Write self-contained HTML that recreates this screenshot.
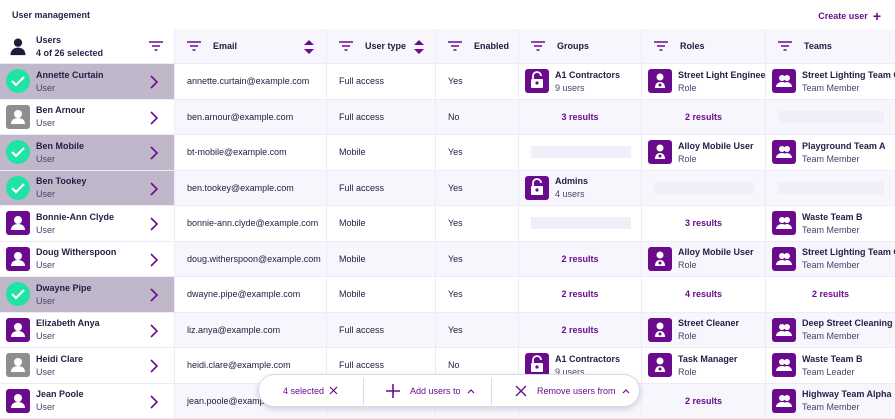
<!DOCTYPE html>
<html><head><meta charset="utf-8"><style>
*{box-sizing:border-box;margin:0;padding:0}
body{width:895px;height:419px;overflow:hidden;background:#fff;font-family:"Liberation Sans",Arial,sans-serif;color:#1f1b3f;font-size:9px;position:relative}
.top{position:absolute;left:12px;top:10px;font-weight:bold;font-size:9px;color:#2a1f4a}
.create{position:absolute;right:14px;top:8px;font-weight:bold;font-size:9px;color:#6b0d8f}
.create b{font-size:14px;margin-left:5px;vertical-align:-2px}
.hdr{position:absolute;top:29px;left:0;width:895px;height:35px;background:#f6f6fc;border-bottom:1px solid #ecebf7}
.row{position:absolute;left:0;width:895px;height:35.5px;border-bottom:1px solid #ecebf7}
.row.alt{background:#f6f6fc}
.c{position:absolute;top:0;height:100%;border-left:1px solid #ecebf7;display:flex;align-items:center;overflow:hidden;white-space:nowrap}
.c0{left:0;width:174px;background:#fff;border-left:none}
.sel .c0{background:#c0b7cb}
.c1{left:174px;width:152px;padding-left:12px}
.c2{left:326px;width:109px;padding-left:12px}
.c3{left:435px;width:83px;padding-left:12px}
.c4{left:518px;width:123px;padding-left:6px}
.c5{left:641px;width:124px;padding-left:6px}
.c6{left:765px;width:130px;padding-left:6px}
.hdr .c{font-weight:bold}
.av{width:24px;height:24px;border-radius:3px;margin-left:6px;margin-right:6px;display:flex;align-items:center;justify-content:center;flex:none}
.pu{background:#6a0a8d}.gr{background:#8e8e8e}
.ck{background:#20e3a6;border-radius:50%}
.nm b{display:block;font-size:9px;color:#231d45;margin-bottom:3px}
.nm span{color:#4a3f6a}
.arr{position:absolute;left:150px;top:11px}
.res{justify-content:center;color:#6b0d8f;font-weight:bold;padding-left:0}
.sk{display:block;width:100px;height:12px;background:#f0eef8;margin-left:6px}
.ic{width:24px;height:24px;border-radius:3px;background:#6a0a8d;margin-right:6px;flex:none;display:flex;align-items:center;justify-content:center}
.flt{margin-right:12px}
.tb{position:absolute;left:258px;top:374px;width:382px;height:33px;background:#fff;border:1px solid #ddd9ea;border-radius:17px;box-shadow:0 2px 6px rgba(60,40,90,.2);color:#6b0d8f;font-size:9px}
.tb div{position:absolute;top:0;height:100%;display:flex;align-items:center}
.dv{position:absolute;top:3px;width:1px;height:27px;background:#ddd9ea}
</style></head><body>
<div class="top">User management</div>
<div class="create">Create user<b>+</b></div>

<svg width="0" height="0" style="position:absolute"><defs>
<g id="flt"><path d="M0 1h14M3 5h8M5.5 9h3" stroke="#6b0d8f" stroke-width="1.6"/></g>
<g id="sort"><path d="M5 0L10 5H0zM5 14L10 9H0z" fill="#6b0d8f"/></g>
<g id="chev"><path d="M1 1l6 6-6 6" stroke="#6b0d8f" stroke-width="1.6" fill="none"/></g>
<g id="person"><circle cx="12" cy="9" r="4" fill="#fff"/><path d="M5 19c0-4 3-6 7-6s7 2 7 6z" fill="#fff"/></g>
<g id="check"><path d="M6 12l4 4 8-8" stroke="#fff" stroke-width="2.2" fill="none"/></g>
<g id="lock"><path d="M8 10V7a4 4 0 0 1 8 0" stroke="#fff" stroke-width="1.8" fill="none"/><rect x="6" y="10" width="12" height="9" rx="1" fill="#fff"/><circle cx="12" cy="14" r="1.6" fill="#6a0a8d"/></g>
<g id="role"><circle cx="12" cy="8" r="3.5" fill="#fff"/><path d="M7 19c0-4 2-6 5-6s5 2 5 6z" fill="#fff"/><circle cx="12" cy="16" r="1.5" fill="#6a0a8d"/></g>
<g id="team"><circle cx="10" cy="9" r="3" fill="#fff"/><circle cx="15" cy="9" r="3" fill="#fff"/><path d="M4 18c0-3 3-5 6-5s6 2 6 5zM11 18c0-3 2-5 4-5s5 2 5 5z" fill="#fff"/></g>
</defs></svg>

<div class="hdr">
<div class="c c0"><svg width="20" height="20" style="margin-left:8px;margin-right:8px" viewBox="0 0 24 24"><circle cx="12" cy="8" r="5" fill="#1f1b3f"/><path d="M3 23c0-6 4-9 9-9s9 3 9 9z" fill="#1f1b3f"/></svg><div class="nm"><b>Users</b><span style="color:#2a1f4a">4 of 26 selected</span></div><svg style="position:absolute;left:149px;top:12px" width="14" height="11"><use href="#flt"/></svg></div>
<div class="c c1"><svg class="flt" width="14" height="11"><use href="#flt"/></svg>Email<svg style="position:absolute;left:129px;top:11px" width="10" height="14"><use href="#sort"/></svg></div>
<div class="c c2"><svg class="flt" width="14" height="11"><use href="#flt"/></svg>User type<svg style="position:absolute;left:87px;top:11px" width="10" height="14"><use href="#sort"/></svg></div>
<div class="c c3"><svg class="flt" width="14" height="11"><use href="#flt"/></svg>Enabled</div>
<div class="c c4" style="padding-left:12px"><svg class="flt" width="14" height="11"><use href="#flt"/></svg>Groups</div>
<div class="c c5" style="padding-left:12px"><svg class="flt" width="14" height="11"><use href="#flt"/></svg>Roles</div>
<div class="c c6" style="padding-left:12px"><svg class="flt" width="14" height="11"><use href="#flt"/></svg>Teams</div>
</div>

<div class="row sel" style="top:64px"><div class="c c0"><div class="av ck"><svg width="24" height="24"><use href="#check"/></svg></div><div class="nm"><b>Annette Curtain</b><span>User</span></div><svg class="arr" width="9" height="14"><use href="#chev"/></svg></div>
<div class="c c1">annette.curtain@example.com</div><div class="c c2">Full access</div><div class="c c3">Yes</div>
<div class="c c4"><div class="ic"><svg width="24" height="24"><use href="#lock"/></svg></div><div class="nm"><b>A1 Contractors</b><span>9 users</span></div></div>
<div class="c c5"><div class="ic"><svg width="24" height="24"><use href="#role"/></svg></div><div class="nm"><b>Street Light Engineer</b><span>Role</span></div></div>
<div class="c c6"><div class="ic"><svg width="24" height="24"><use href="#team"/></svg></div><div class="nm"><b>Street Lighting Team C</b><span>Team Member</span></div></div></div>

<div class="row alt" style="top:99.5px"><div class="c c0"><div class="av gr"><svg width="24" height="24"><use href="#person"/></svg></div><div class="nm"><b>Ben Arnour</b><span>User</span></div><svg class="arr" width="9" height="14"><use href="#chev"/></svg></div>
<div class="c c1">ben.arnour@example.com</div><div class="c c2">Full access</div><div class="c c3">No</div>
<div class="c c4 res">3 results</div><div class="c c5 res">2 results</div><div class="c c6"><span class="sk" style="width:106px"></span></div></div>

<div class="row sel" style="top:135px"><div class="c c0"><div class="av ck"><svg width="24" height="24"><use href="#check"/></svg></div><div class="nm"><b>Ben Mobile</b><span>User</span></div><svg class="arr" width="9" height="14"><use href="#chev"/></svg></div>
<div class="c c1">bt-mobile@example.com</div><div class="c c2">Mobile</div><div class="c c3">Yes</div>
<div class="c c4"><span class="sk"></span></div>
<div class="c c5"><div class="ic"><svg width="24" height="24"><use href="#role"/></svg></div><div class="nm"><b>Alloy Mobile User</b><span>Role</span></div></div>
<div class="c c6"><div class="ic"><svg width="24" height="24"><use href="#team"/></svg></div><div class="nm"><b>Playground Team A</b><span>Team Member</span></div></div></div>

<div class="row sel alt" style="top:170.5px"><div class="c c0"><div class="av ck"><svg width="24" height="24"><use href="#check"/></svg></div><div class="nm"><b>Ben Tookey</b><span>User</span></div><svg class="arr" width="9" height="14"><use href="#chev"/></svg></div>
<div class="c c1">ben.tookey@example.com</div><div class="c c2">Full access</div><div class="c c3">Yes</div>
<div class="c c4"><div class="ic"><svg width="24" height="24"><use href="#lock"/></svg></div><div class="nm"><b>Admins</b><span>4 users</span></div></div>
<div class="c c5"><span class="sk" style="margin-left:6px"></span></div><div class="c c6"><span class="sk" style="width:106px"></span></div></div>

<div class="row" style="top:206px"><div class="c c0"><div class="av pu"><svg width="24" height="24"><use href="#person"/></svg></div><div class="nm"><b>Bonnie-Ann Clyde</b><span>User</span></div><svg class="arr" width="9" height="14"><use href="#chev"/></svg></div>
<div class="c c1">bonnie-ann.clyde@example.com</div><div class="c c2">Mobile</div><div class="c c3">Yes</div>
<div class="c c4"><span class="sk"></span></div><div class="c c5 res">3 results</div>
<div class="c c6"><div class="ic"><svg width="24" height="24"><use href="#team"/></svg></div><div class="nm"><b>Waste Team B</b><span>Team Member</span></div></div></div>

<div class="row alt" style="top:241.5px"><div class="c c0"><div class="av pu"><svg width="24" height="24"><use href="#person"/></svg></div><div class="nm"><b>Doug Witherspoon</b><span>User</span></div><svg class="arr" width="9" height="14"><use href="#chev"/></svg></div>
<div class="c c1">doug.witherspoon@example.com</div><div class="c c2">Mobile</div><div class="c c3">Yes</div>
<div class="c c4 res">2 results</div>
<div class="c c5"><div class="ic"><svg width="24" height="24"><use href="#role"/></svg></div><div class="nm"><b>Alloy Mobile User</b><span>Role</span></div></div>
<div class="c c6"><div class="ic"><svg width="24" height="24"><use href="#team"/></svg></div><div class="nm"><b>Street Lighting Team C</b><span>Team Member</span></div></div></div>

<div class="row sel" style="top:277px"><div class="c c0"><div class="av ck"><svg width="24" height="24"><use href="#check"/></svg></div><div class="nm"><b>Dwayne Pipe</b><span>User</span></div><svg class="arr" width="9" height="14"><use href="#chev"/></svg></div>
<div class="c c1">dwayne.pipe@example.com</div><div class="c c2">Mobile</div><div class="c c3">Yes</div>
<div class="c c4 res">2 results</div><div class="c c5 res">4 results</div><div class="c c6 res">2 results</div></div>

<div class="row alt" style="top:312.5px"><div class="c c0"><div class="av pu"><svg width="24" height="24"><use href="#person"/></svg></div><div class="nm"><b>Elizabeth Anya</b><span>User</span></div><svg class="arr" width="9" height="14"><use href="#chev"/></svg></div>
<div class="c c1">liz.anya@example.com</div><div class="c c2">Full access</div><div class="c c3">Yes</div>
<div class="c c4 res">2 results</div>
<div class="c c5"><div class="ic"><svg width="24" height="24"><use href="#role"/></svg></div><div class="nm"><b>Street Cleaner</b><span>Role</span></div></div>
<div class="c c6"><div class="ic"><svg width="24" height="24"><use href="#team"/></svg></div><div class="nm"><b>Deep Street Cleaning</b><span>Team Member</span></div></div></div>

<div class="row" style="top:348px"><div class="c c0"><div class="av gr"><svg width="24" height="24"><use href="#person"/></svg></div><div class="nm"><b>Heidi Clare</b><span>User</span></div><svg class="arr" width="9" height="14"><use href="#chev"/></svg></div>
<div class="c c1">heidi.clare@example.com</div><div class="c c2">Full access</div><div class="c c3">No</div>
<div class="c c4"><div class="ic"><svg width="24" height="24"><use href="#lock"/></svg></div><div class="nm"><b>A1 Contractors</b><span>9 users</span></div></div>
<div class="c c5"><div class="ic"><svg width="24" height="24"><use href="#role"/></svg></div><div class="nm"><b>Task Manager</b><span>Role</span></div></div>
<div class="c c6"><div class="ic"><svg width="24" height="24"><use href="#team"/></svg></div><div class="nm"><b>Waste Team B</b><span>Team Leader</span></div></div></div>

<div class="row alt" style="top:383.5px"><div class="c c0"><div class="av pu"><svg width="24" height="24"><use href="#person"/></svg></div><div class="nm"><b>Jean Poole</b><span>User</span></div><svg class="arr" width="9" height="14"><use href="#chev"/></svg></div>
<div class="c c1">jean.poole@example.com</div><div class="c c2">Mobile</div><div class="c c3">Yes</div>
<div class="c c4 res">2 results</div><div class="c c5 res">2 results</div>
<div class="c c6"><div class="ic"><svg width="24" height="24"><use href="#team"/></svg></div><div class="nm"><b>Highway Team Alpha</b><span>Team Member</span></div></div></div>

<div class="tb">
<div style="left:24px">4 selected<svg width="9" height="9" style="margin-left:5px"><path d="M1 1l7 7M8 1l-7 7" stroke="#6b0d8f" stroke-width="1.2"/></svg></div>
<span class="dv" style="left:104px"></span>
<div style="left:127px"><svg width="14" height="14" style="margin-right:10px"><path d="M7 0v14M0 7h14" stroke="#6b0d8f" stroke-width="1.6"/></svg>Add users to<svg width="8" height="6" style="margin-left:6px"><path d="M1 5l3-3 3 3" stroke="#6b0d8f" stroke-width="1.2" fill="none"/></svg></div>
<span class="dv" style="left:232px"></span>
<div style="left:256px"><svg width="12" height="12" style="margin-right:10px"><path d="M1 1l10 10M11 1L1 11" stroke="#6b0d8f" stroke-width="1.4"/></svg>Remove users from<svg width="8" height="6" style="margin-left:6px"><path d="M1 5l3-3 3 3" stroke="#6b0d8f" stroke-width="1.2" fill="none"/></svg></div>
</div>
</body></html>
